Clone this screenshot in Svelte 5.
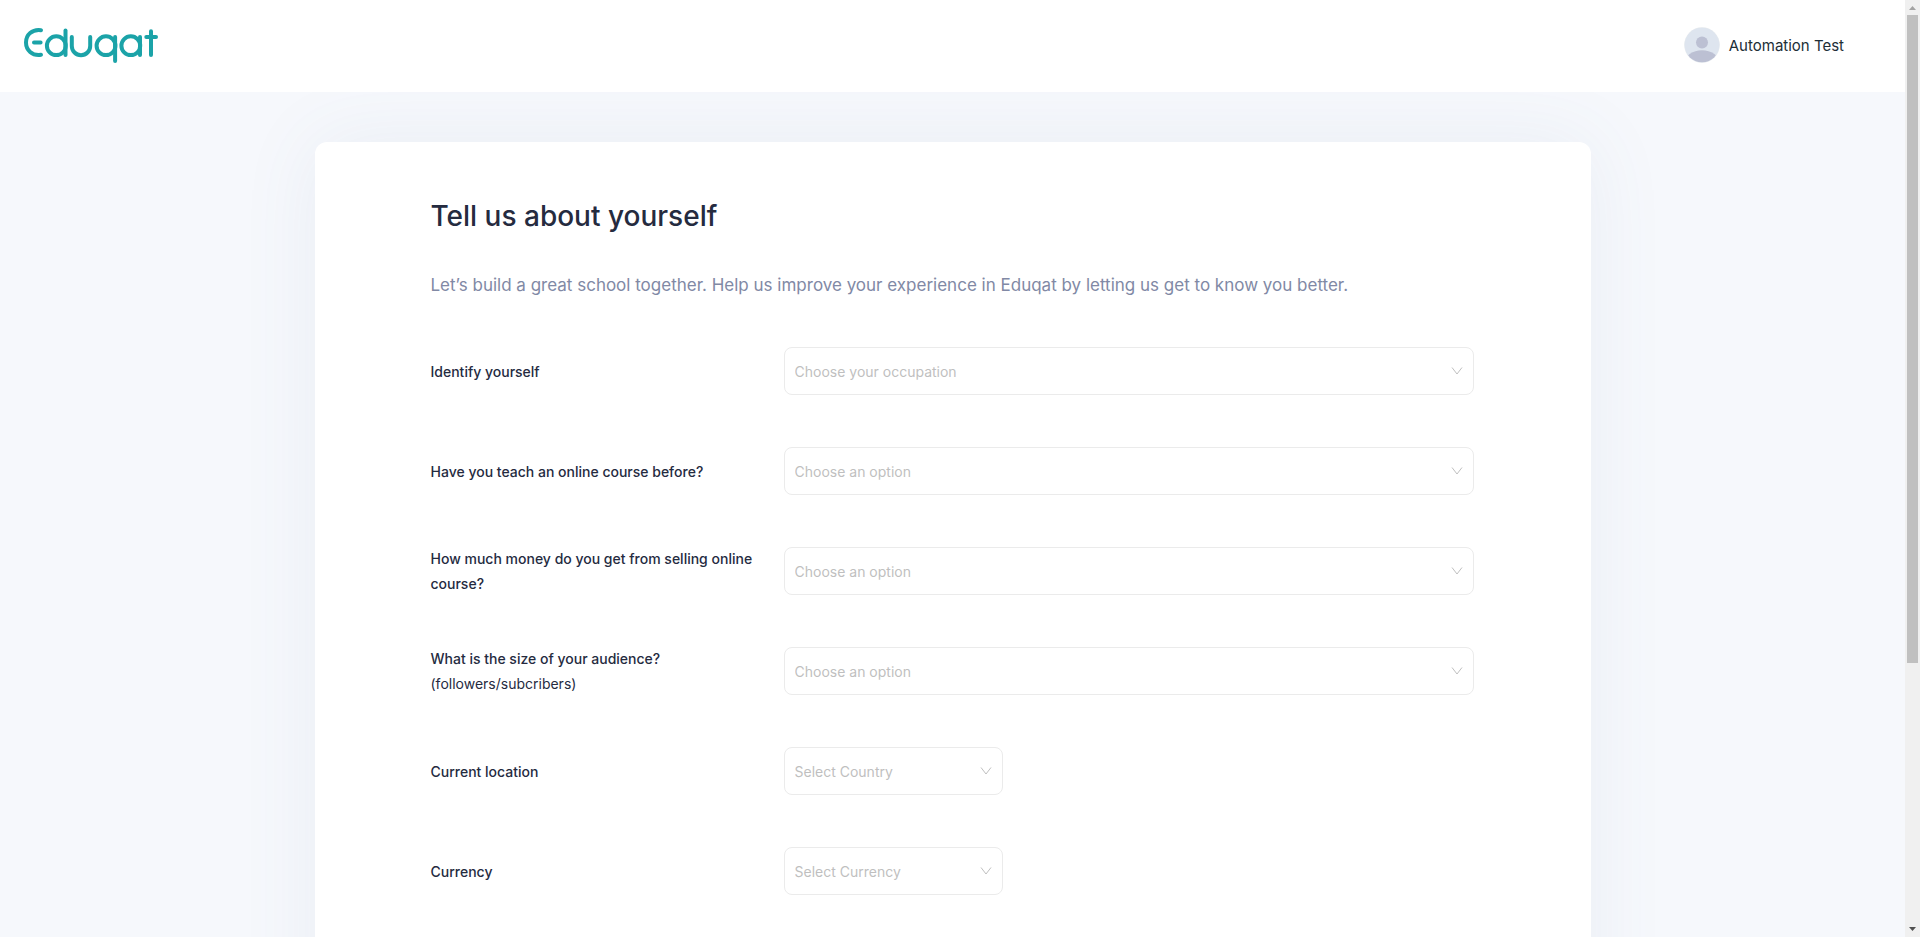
<script>
  const fields = [
    { id: 'occupation', label: 'Identify yourself', placeholder: 'Choose your occupation' },
    { id: 'taught', label: 'Have you teach an online course before?', placeholder: 'Choose an option' },
    { id: 'income', label: 'How much money do you get from selling online course?', placeholder: 'Choose an option' },
    { id: 'audience', label: 'What is the size of your audience?', note: '(followers/subcribers)', placeholder: 'Choose an option' },
    { id: 'country', label: 'Current location', placeholder: 'Select Country', small: true },
    { id: 'currency', label: 'Currency', placeholder: 'Select Currency', small: true }
  ];
</script>

<div class="shell">
  <div class="page">
    <header>
      <a class="logo" href="#home" aria-label="Eduqat">
        <svg width="136" height="38" viewBox="22 26 136 38" fill="none" stroke="#1ba3a8" stroke-width="4" stroke-linecap="round" stroke-linejoin="round">
          <path d="M41 30.2C32 29 26 35 26 42.5S32 56 41 54.8M34 42.5H40.6" />
          <circle cx="56.3" cy="45.7" r="9.4" />
          <path d="M65.5 30.5V55" />
          <path d="M71.8 37V46a9.2 9.2 0 0 0 18.4 0V37" />
          <circle cx="106" cy="45.7" r="9.4" />
          <path d="M115.1 37V61" />
          <circle cx="130.8" cy="45.7" r="9.4" />
          <path d="M140 37V55" />
          <path d="M151 31.3V55M146.3 37H156" />
        </svg>
      </a>
      <button class="user" type="button">
        <svg width="36" height="36" viewBox="0 0 36 36" aria-hidden="true">
          <clipPath id="face"><circle cx="18" cy="18" r="17.3" /></clipPath>
          <circle cx="18" cy="18" r="17.8" fill="#e6eaee" />
          <g clip-path="url(#face)">
            <rect width="36" height="36" fill="#dee5ef" />
            <circle cx="18" cy="15.5" r="6" fill="#bcc0d3" />
            <ellipse cx="18" cy="35.3" rx="17" ry="12" fill="#bcc0d3" />
          </g>
        </svg>
        <span>Automation Test</span>
      </button>
    </header>

    <main>
      <form class="card">
        <h1>Tell us about yourself</h1>
        <p>Let’s build a great school together. Help us improve your experience in Eduqat by letting us get to know you better.</p>
        <div class="rows">
          {#each fields as f}
            <div class="row">
              <label for={f.id}>{f.label}{#if f.note}<span class="note">{f.note}</span>{/if}</label>
              <div class="control" class:small={f.small}>
                <select id={f.id}>
                  <option>{f.placeholder}</option>
                </select>
                <svg width="12" height="12" viewBox="0 0 12 12" fill="none" stroke="#bfbfbf" aria-hidden="true">
                  <path d="M1 2.5L6 9L11 2.5" />
                </svg>
              </div>
            </div>
          {/each}
        </div>
      </form>
    </main>
  </div>

  <div class="scrollbar" aria-hidden="true">
    <svg width="15" height="15" viewBox="0 0 15 15"><path d="M4 10L7.5 6L11 10Z" fill="#a3a3a3" /></svg>
    <div class="track"><div class="thumb"></div></div>
    <svg width="15" height="15" viewBox="0 0 15 15"><path d="M4 5L7.5 9L11 5Z" fill="#505050" /></svg>
  </div>
</div>

<style>
  :global(body) {
    margin: 0;
  }
  .shell {
    display: flex;
    height: 100vh;
    font-family: Inter, "Liberation Sans", sans-serif;
    font-size: 14px;
    color: #252b3f;
  }
  .page {
    flex: 1;
    min-width: 0;
    overflow-y: auto;
    scrollbar-width: none;
    background: #f6f8fc;
  }
  header {
    position: relative;
    z-index: 1;
    display: flex;
    align-items: center;
    justify-content: space-between;
    height: 92px;
    padding: 0 61px 2px 22px;
    background: #fff;
    box-sizing: border-box;
  }
  .logo svg,
  .user svg {
    display: block;
  }
  .user {
    display: flex;
    align-items: center;
    gap: 9px;
    padding: 0;
    border: 0;
    background: none;
    font: inherit;
    font-size: 15px;
    color: #212e36;
  }
  main {
    padding: 50px 0;
  }
  .card {
    box-sizing: border-box;
    width: 67%;
    max-width: 1276px;
    margin: 0 auto;
    padding: 54px 117px 300px 116px;
    border-radius: 12px;
    background: #fff;
    box-shadow: 0 0 80px rgba(95, 115, 155, 0.08);
  }
  h1 {
    margin: 0;
    font-size: 28px;
    line-height: 40px;
    font-weight: 500;
    color: #252b3f;
  }
  p {
    margin: 33px 0 45px;
    font-size: 17px;
    line-height: 32px;
    color: #8189a5;
  }
  .rows {
    display: grid;
    gap: 50px;
  }
  .row {
    display: grid;
    grid-template-columns: 353fr 690fr;
    align-items: center;
    min-height: 50px;
  }
  label {
    padding-right: 24px;
    line-height: 25px;
    font-weight: 500;
  }
  .note {
    display: block;
    font-weight: 400;
  }
  .control {
    position: relative;
  }
  .small {
    width: 219px;
  }
  select {
    display: block;
    box-sizing: border-box;
    width: 100%;
    height: 48px;
    padding: 0 40px 0 10px;
    border: 1px solid #ebebeb;
    border-radius: 8px;
    background: #fff;
    appearance: none;
    font: inherit;
    color: #bfbfbf;
  }
  .control svg {
    position: absolute;
    top: 18px;
    right: 11px;
    pointer-events: none;
  }
  .scrollbar {
    display: flex;
    flex-direction: column;
    width: 15px;
    background: #f0f0f0;
  }
  .scrollbar svg {
    display: block;
  }
  .track {
    flex: 1;
    padding: 0 2px;
  }
  .thumb {
    height: 71.4%;
    background: #c0c0c0;
  }
</style>
